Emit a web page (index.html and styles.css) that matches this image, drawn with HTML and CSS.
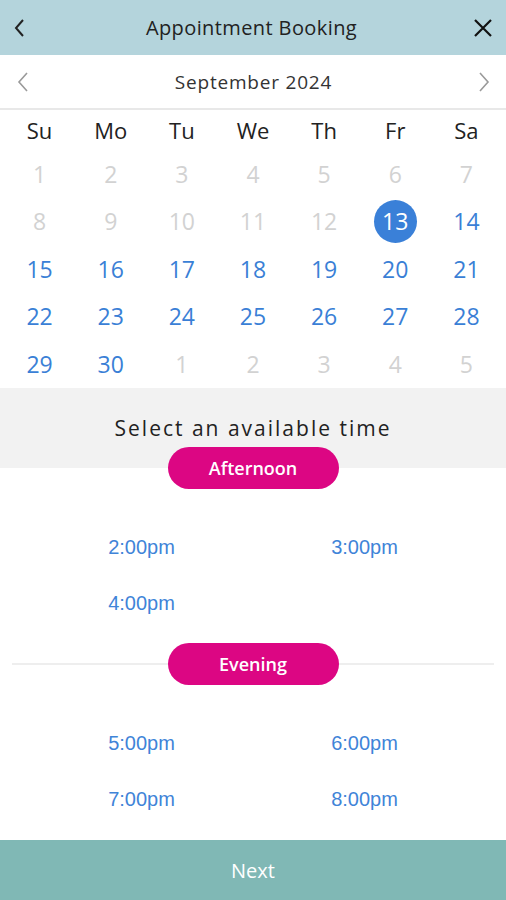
FILE: index.html
```html
<!DOCTYPE html>
<html lang="en">
<head>
<meta charset="utf-8">
<title>Appointment Booking</title>
<link rel="stylesheet" href="styles.css">
</head>
<body>
<div class="app">
  <header class="topbar">
    <button class="icon-btn" aria-label="Back">
      <svg width="14" height="20" viewBox="0 0 14 20"><path d="M10 2 L3 10 L10 18" fill="none" stroke="#222" stroke-width="2"/></svg>
    </button>
    <h1 class="title">Appointment Booking</h1>
    <button class="icon-btn" aria-label="Close">
      <svg width="20" height="20" viewBox="0 0 20 20"><path d="M2 2 L18 18 M18 2 L2 18" fill="none" stroke="#111" stroke-width="2.2"/></svg>
    </button>
  </header>

  <div class="month-bar">
    <button class="icon-btn nav" aria-label="Previous month">
      <svg width="14" height="22" viewBox="0 0 14 22"><path d="M11 2 L3 11 L11 20" fill="none" stroke="#9a9a9a" stroke-width="1.6"/></svg>
    </button>
    <div class="month">September 2024</div>
    <button class="icon-btn nav" aria-label="Next month">
      <svg width="14" height="22" viewBox="0 0 14 22"><path d="M3 2 L11 11 L3 20" fill="none" stroke="#9a9a9a" stroke-width="1.6"/></svg>
    </button>
  </div>

  <div class="calendar">
    <div class="dow">Su</div><div class="dow">Mo</div><div class="dow">Tu</div><div class="dow">We</div><div class="dow">Th</div><div class="dow">Fr</div><div class="dow">Sa</div>

    <div class="day off">1</div><div class="day off">2</div><div class="day off">3</div><div class="day off">4</div><div class="day off">5</div><div class="day off">6</div><div class="day off">7</div>
    <div class="day off">8</div><div class="day off">9</div><div class="day off">10</div><div class="day off">11</div><div class="day off">12</div><div class="day"><span class="selected">13</span></div><div class="day">14</div>
    <div class="day">15</div><div class="day">16</div><div class="day">17</div><div class="day">18</div><div class="day">19</div><div class="day">20</div><div class="day">21</div>
    <div class="day">22</div><div class="day">23</div><div class="day">24</div><div class="day">25</div><div class="day">26</div><div class="day">27</div><div class="day">28</div>
    <div class="day">29</div><div class="day">30</div><div class="day off">1</div><div class="day off">2</div><div class="day off">3</div><div class="day off">4</div><div class="day off">5</div>
  </div>

  <div class="select-head">Select an available time</div>

  <section class="slot-group first">
    <div class="divider"><span class="pill">Afternoon</span></div>
    <div class="slots">
      <div class="slot">2:00pm</div>
      <div class="slot">3:00pm</div>
      <div class="slot">4:00pm</div>
    </div>
  </section>

  <section class="slot-group">
    <div class="divider line"><span class="pill">Evening</span></div>
    <div class="slots">
      <div class="slot">5:00pm</div>
      <div class="slot">6:00pm</div>
      <div class="slot">7:00pm</div>
      <div class="slot">8:00pm</div>
    </div>
  </section>

  <footer class="next">Next</footer>
</div>
</body>
</html>
```

FILE: styles.css
```css
* { box-sizing: border-box; }
html, body { margin: 0; padding: 0; }
body {
  font-family: "Open Sans", "Noto Sans", sans-serif;
  background: #fff;
  color: #222;
}
.app {
  width: 506px;
  height: 900px;
  display: flex;
  flex-direction: column;
  overflow: hidden;
}
.icon-btn {
  border: 0;
  background: none;
  padding: 0;
  width: 40px;
  height: 40px;
  display: flex;
  align-items: center;
  justify-content: center;
}
.topbar {
  height: 55px;
  background: #b4d4dc;
  display: flex;
  align-items: center;
  justify-content: space-between;
  padding: 0 3px 0 0;
}
.topbar .title {
  margin: 0;
  font-size: 20px;
  font-weight: 400;
  color: #222;
  letter-spacing: 0.4px;
}
.month-bar {
  height: 55px;
  display: flex;
  align-items: center;
  justify-content: space-between;
  padding: 0 2px 0 3px;
  border-bottom: 2px solid #e8e8e8;
}
.month {
  font-size: 19px;
  color: #333;
  letter-spacing: 0.8px;
}
.calendar {
  display: grid;
  grid-template-columns: repeat(7, 1fr);
  grid-auto-rows: 47.5px;
  grid-template-rows: 40px;
  padding: 0 4px;
}
.dow {
  display: flex;
  align-items: center;
  justify-content: center;
  font-size: 22px;
  color: #222;
}
.day {
  display: flex;
  align-items: center;
  justify-content: center;
  font-size: 23px;
  color: #3a7fd6;
}
.day.off { color: #d2d2d2; }
.selected {
  width: 43px;
  height: 43px;
  border-radius: 50%;
  background: #3a80d8;
  color: #fff;
  display: flex;
  align-items: center;
  justify-content: center;
}
.select-head {
  height: 80px;
  background: #f2f2f2;
  display: flex;
  align-items: center;
  justify-content: center;
  font-size: 21px;
  letter-spacing: 2px;
  color: #222;
}
.slot-group.first { margin-top: -21px; }
.divider {
  position: relative;
  height: 42px;
  display: flex;
  align-items: center;
  justify-content: center;
  margin: 0 12px;
}
.divider.line::before {
  content: "";
  position: absolute;
  left: 0;
  right: 0;
  top: 20px;
  height: 2px;
  background: #eeeeee;
}
.pill {
  position: relative;
  width: 171px;
  height: 42px;
  border-radius: 21px;
  background: #dc0683;
  color: #fff;
  font-size: 18px;
  font-weight: 600;
  display: flex;
  align-items: center;
  justify-content: center;
}
.slots {
  display: grid;
  grid-template-columns: 1fr 1fr;
  grid-auto-rows: 56px;
  padding: 31px 30px 11px;
}
.slot {
  display: flex;
  align-items: center;
  justify-content: center;
  font-family: "Liberation Sans", Arial, sans-serif;
  font-size: 20px;
  color: #3f84d8;
}
.next {
  margin-top: auto;
  height: 60px;
  background: #80b8b5;
  color: #fff;
  font-size: 20px;
  display: flex;
  align-items: center;
  justify-content: center;
}
```
